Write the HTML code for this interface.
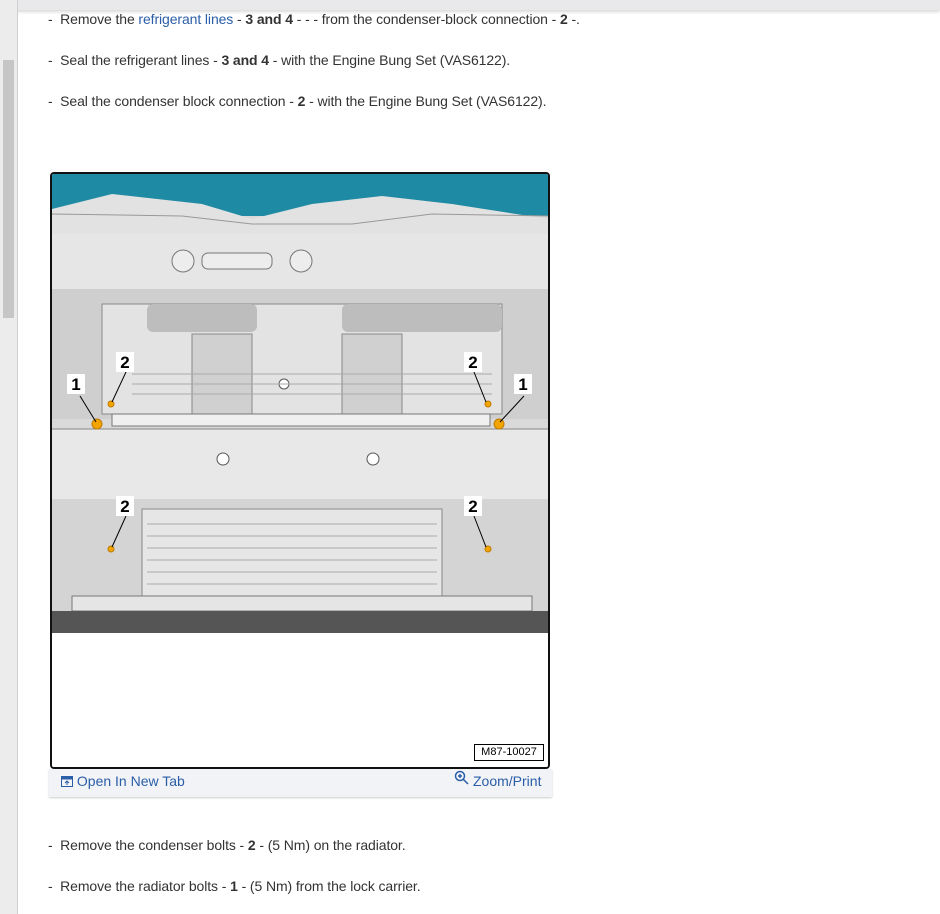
<!DOCTYPE html>
<html><head><meta charset="utf-8"><style>
*{margin:0;padding:0;box-sizing:border-box}
body{width:940px;height:914px;background:#fff;font-family:"Liberation Sans",sans-serif;position:relative;overflow:hidden;color:#333}
.top{position:absolute;left:0;top:0;width:940px;height:10px;background:#e9e9eb;box-shadow:0 2px 3px rgba(0,0,0,.15)}
.side{position:absolute;left:0;top:0;width:18px;height:914px;background:#ececec;border-right:1px solid #d0d0d0}
.thumb{position:absolute;left:3px;top:60px;width:11px;height:258px;background:#c6c6c6}
p{position:absolute;left:48px;font-size:14px;line-height:18px;white-space:nowrap;letter-spacing:-0.1px}
a{color:#2a5ea8;text-decoration:none}
.fig{position:absolute;left:50px;top:172px;width:500px;height:597px;border:2px solid #111;border-radius:4px;background:#fff;overflow:hidden}
.cap{position:absolute;left:49px;top:769px;width:503px;height:28px;background:#f2f3f7;box-shadow:0 1px 2px rgba(0,0,0,.2)}
.cap span{position:absolute;top:4px;font-size:14px;color:#2a5ea8}
.code{position:absolute;left:422px;top:570px;width:70px;height:17px;border:1px solid #000;font-size:11px;text-align:center;line-height:15px;color:#000}
</style></head><body>
<div class="top"></div>
<div class="side"><div class="thumb"></div></div>
<p style="top:10px">-&nbsp; Remove the <a>refrigerant lines</a> - <b>3 and 4</b> - - - from the condenser-block connection - <b>2</b> -.</p>
<p style="top:51px">-&nbsp; Seal the refrigerant lines - <b>3 and 4</b> - with the Engine Bung Set (VAS6122).</p>
<p style="top:92px">-&nbsp; Seal the condenser block connection - <b>2</b> - with the Engine Bung Set (VAS6122).</p>
<div class="fig">
<svg width="496" height="593" viewBox="0 0 496 593" xmlns="http://www.w3.org/2000/svg">
<rect x="0" y="0" width="496" height="470" fill="#d9d9d9"/>
<rect x="0" y="0" width="496" height="42" fill="#1f8aa3"/>
<path d="M0 35 L60 20 L150 30 L200 45 L260 30 L330 22 L400 30 L496 45 L496 80 L0 80Z" fill="#e2e2e2"/>
<path d="M0 40 L130 42 L200 50 L300 50 L380 40 L496 42" stroke="#999" fill="none"/>
<rect x="0" y="60" width="496" height="55" fill="#e6e6e6"/>
<circle cx="131" cy="87" r="11" fill="#ededed" stroke="#777"/>
<circle cx="249" cy="87" r="11" fill="#ededed" stroke="#777"/>
<rect x="150" y="79" width="70" height="16" rx="6" fill="#ededed" stroke="#777"/>
<rect x="0" y="115" width="496" height="130" fill="#cfcfcf"/>
<rect x="50" y="130" width="400" height="110" fill="#e3e3e3" stroke="#888"/>
<rect x="95" y="130" width="110" height="28" rx="6" fill="#bdbdbd"/>
<rect x="290" y="130" width="160" height="28" rx="6" fill="#bdbdbd"/>
<rect x="140" y="160" width="60" height="80" fill="#d0d0d0" stroke="#888"/>
<rect x="290" y="160" width="60" height="80" fill="#d0d0d0" stroke="#888"/>
<circle cx="232" cy="210" r="5" fill="#fff" stroke="#555"/>
<g stroke="#aaa">
<line x1="80" y1="200" x2="440" y2="200"/><line x1="80" y1="210" x2="440" y2="210"/><line x1="80" y1="220" x2="440" y2="220"/>
</g>
<rect x="60" y="240" width="378" height="12" fill="#f0f0f0" stroke="#777"/>
<rect x="0" y="255" width="496" height="70" fill="#e8e8e8"/>
<path d="M0 255 L496 255" stroke="#888"/>
<circle cx="171" cy="285" r="6" fill="#fff" stroke="#555"/>
<circle cx="321" cy="285" r="6" fill="#fff" stroke="#555"/>
<rect x="0" y="325" width="496" height="145" fill="#d4d4d4"/>
<rect x="90" y="335" width="300" height="90" fill="#e6e6e6" stroke="#888"/>
<g stroke="#aaa">
<line x1="95" y1="350" x2="385" y2="350"/><line x1="95" y1="362" x2="385" y2="362"/><line x1="95" y1="374" x2="385" y2="374"/><line x1="95" y1="386" x2="385" y2="386"/><line x1="95" y1="398" x2="385" y2="398"/><line x1="95" y1="410" x2="385" y2="410"/>
</g>
<rect x="20" y="422" width="460" height="15" fill="#e5e5e5" stroke="#777"/>
<rect x="0" y="437" width="496" height="22" fill="#555"/>
<rect x="0" y="459" width="496" height="134" fill="#fff"/>
<g fill="#f2a500" stroke="#c07a00"><circle cx="45" cy="250" r="5"/><circle cx="447" cy="250" r="5"/><circle cx="59" cy="230" r="3"/><circle cx="436" cy="230" r="3"/><circle cx="59" cy="375" r="3"/><circle cx="436" cy="375" r="3"/></g>
<g stroke="#000" stroke-width="1"><line x1="28" y1="222" x2="44" y2="248"/><line x1="472" y1="222" x2="448" y2="248"/><line x1="74" y1="198" x2="60" y2="228"/><line x1="422" y1="198" x2="434" y2="228"/><line x1="74" y1="342" x2="60" y2="373"/><line x1="422" y1="342" x2="434" y2="373"/></g>
<g font-family="Liberation Sans,sans-serif" font-weight="bold" font-size="17" text-anchor="middle">
<rect x="15" y="200" width="18" height="20" fill="#fff"/><text x="24" y="216">1</text>
<rect x="462" y="200" width="18" height="20" fill="#fff"/><text x="471" y="216">1</text>
<rect x="64" y="178" width="18" height="20" fill="#fff"/><text x="73" y="194">2</text>
<rect x="412" y="178" width="18" height="20" fill="#fff"/><text x="421" y="194">2</text>
<rect x="64" y="322" width="18" height="20" fill="#fff"/><text x="73" y="338">2</text>
<rect x="412" y="322" width="18" height="20" fill="#fff"/><text x="421" y="338">2</text>
</g>
</svg>
<div class="code">M87-10027</div>
</div>
<div class="cap">
<span style="left:12px"><svg width="12" height="11" style="vertical-align:-1px"><rect x="0.5" y="0.5" width="11" height="10" fill="none" stroke="#2a5ea8"/><rect x="0.5" y="0.5" width="11" height="3" fill="#2a5ea8"/><path d="M6 9V5M4 7l2-2 2 2" stroke="#2a5ea8" fill="none"/></svg> Open In New Tab</span>
<span style="left:405px;top:1px"><svg width="15" height="15" style="vertical-align:1px"><circle cx="6" cy="6" r="4.5" fill="none" stroke="#2a5ea8" stroke-width="1.5"/><path d="M9.5 9.5L14 14M4 6h4M6 4v4" stroke="#2a5ea8" stroke-width="1.5"/></svg><span style="position:static;margin-left:4px">Zoom/Print</span></span>
</div>
<p style="top:836px">-&nbsp; Remove the condenser bolts - <b>2</b> - (5 Nm) on the radiator.</p>
<p style="top:877px">-&nbsp; Remove the radiator bolts - <b>1</b> - (5 Nm) from the lock carrier.</p>
</body></html>
